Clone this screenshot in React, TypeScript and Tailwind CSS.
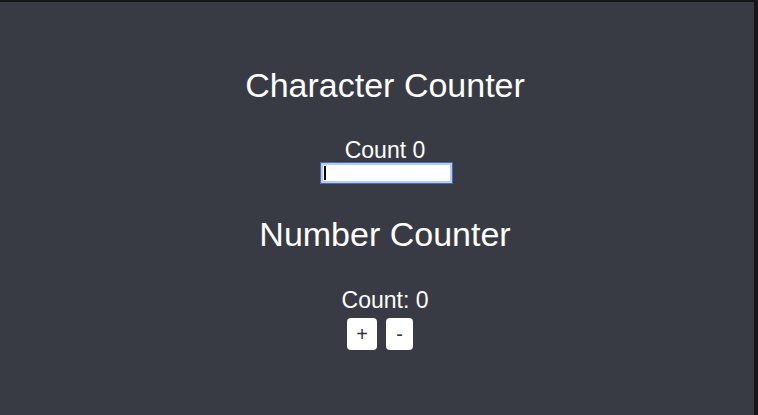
import { useState } from 'react';

export default function App() {
  const [text, setText] = useState('');
  const [count, setCount] = useState(0);

  return (
    <div className="h-[415px] w-[758px] bg-[#161616] pt-[2px] pr-[4px] overflow-hidden">
      <div
        className="h-full bg-[#383b43] text-white pl-[16px] pt-[63px] flex flex-col items-center"
        style={{ fontFamily: '"Liberation Sans", Arial, sans-serif' }}
      >
        <h1 className="text-[34px] leading-[40px]">Character Counter</h1>

        <p className="mt-[33px] text-[23px] leading-[24px]">Count {text.length}</p>
        <div className="ml-[3px] flex items-center w-[133px] h-[22px] bg-white border border-[#3f6cc0] shadow-[inset_0_0_0_2px_#b4cdf2] pl-[3px]">
          <span className="w-[2px] h-[14px] bg-black" />
          <input
            value={text}
            onChange={(e) => setText(e.target.value)}
            className="flex-1 min-w-0 bg-transparent outline-none text-black text-sm"
          />
        </div>

        <h2 className="mt-[30px] text-[34px] leading-[40px]">Number Counter</h2>

        <p className="mt-[34px] text-[23px] leading-[24px]">Count: {count}</p>
        <div className="mt-[6px] flex gap-[9px] pr-[10px]">
          <button
            onClick={() => setCount(count + 1)}
            className="w-[30px] h-[32px] rounded-[4px] bg-white text-[#333] text-[20px] leading-none"
          >
            +
          </button>
          <button
            onClick={() => setCount(count - 1)}
            className="w-[27px] h-[32px] rounded-[4px] bg-white text-[#333] text-[20px] leading-none"
          >
            -
          </button>
        </div>
      </div>
    </div>
  );
}
